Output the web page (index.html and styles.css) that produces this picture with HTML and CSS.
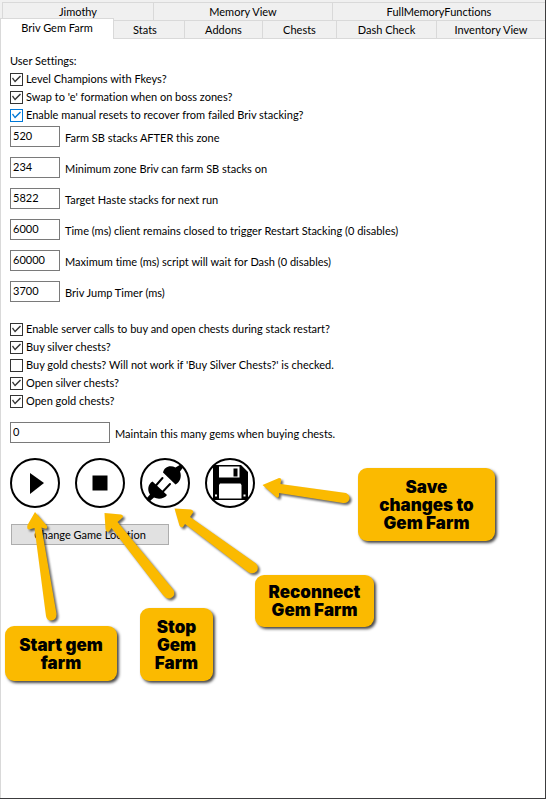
FILE: index.html
```
<!DOCTYPE html>
<html lang="en">
<head>
<meta charset="utf-8">
<meta name="viewport" content="width=device-width, initial-scale=1">
<title>Briv Gem Farm</title>
<link rel="stylesheet" href="styles.css">
</head>
<body>
<main class="window">
  <nav class="tabs">
    <div class="tab-row tab-row-back">
      <button class="tab">Jimothy</button>
      <button class="tab">Memory View</button>
      <button class="tab">FullMemoryFunctions</button>
    </div>
    <div class="tab-row tab-row-front">
      <button class="tab tab-active">Briv Gem Farm</button>
      <button class="tab">Stats</button>
      <button class="tab">Addons</button>
      <button class="tab">Chests</button>
      <button class="tab">Dash Check</button>
      <button class="tab">Inventory View</button>
    </div>
  </nav>

  <form class="panel">
    <section class="group">
      <h1 class="heading">User Settings:</h1>
      <label class="check"><input type="checkbox" checked>Level Champions with Fkeys?</label>
      <label class="check"><input type="checkbox" checked>Swap to 'e' formation when on boss zones?</label>
      <label class="check check-hot"><input type="checkbox" checked>Enable manual resets to recover from failed Briv stacking?</label>
    </section>

    <section class="fields">
      <label class="field"><input type="text" value="520"><span>Farm SB stacks AFTER this zone</span></label>
      <label class="field"><input type="text" value="234"><span>Minimum zone Briv can farm SB stacks on</span></label>
      <label class="field"><input type="text" value="5822"><span>Target Haste stacks for next run</span></label>
      <label class="field"><input type="text" value="6000"><span>Time (ms) client remains closed to trigger Restart Stacking (0 disables)</span></label>
      <label class="field"><input type="text" value="60000"><span>Maximum time (ms) script will wait for Dash (0 disables)</span></label>
      <label class="field"><input type="text" value="3700"><span>Briv Jump Timer (ms)</span></label>
    </section>

    <section class="group chests">
      <label class="check"><input type="checkbox" checked>Enable server calls to buy and open chests during stack restart?</label>
      <label class="check"><input type="checkbox" checked>Buy silver chests?</label>
      <label class="check"><input type="checkbox">Buy gold chests? Will not work if 'Buy Silver Chests?' is checked.</label>
      <label class="check"><input type="checkbox" checked>Open silver chests?</label>
      <label class="check"><input type="checkbox" checked>Open gold chests?</label>
    </section>

    <label class="field field-wide"><input type="text" value="0"><span>Maintain this many gems when buying chests.</span></label>

    <div class="actions">
      <button type="button" class="round" aria-label="Start">
        <svg viewBox="0 0 50 50"><circle class="ring" cx="25" cy="25" r="24"/><path d="M20 15 34 25 20 36Z"/></svg>
      </button>
      <button type="button" class="round" aria-label="Stop">
        <svg viewBox="0 0 50 50"><circle class="ring" cx="25" cy="25" r="24"/><path d="M17.500 17.500h15v15h-15z"/></svg>
      </button>
      <button type="button" class="round" aria-label="Reconnect">
        <svg viewBox="0 0 50 50"><circle class="ring" cx="25" cy="25" r="24"/>
          <path d="M23 14.500C24 9 30 6.500 35.500 9.500L40.500 6.500 43 9.500 40 13.500C42 19 40 24 35.500 26.500Z"/>
          <path d="M12.500 23.500 27 37C24 41 18 41.500 14 39.500L9.500 43.500 6.500 40.500 10 36.500C7 32 8 26 12.500 23.500Z"/>
          <path class="prongs" d="M15.500 28 22.500 20M22.500 34 30 26"/>
        </svg>
      </button>
      <button type="button" class="round" aria-label="Save">
        <svg viewBox="0 0 50 50"><circle class="ring" cx="25" cy="25" r="24"/>
          <path d="M8 7H36L43 14V42H8Z"/>
          <path class="paper" d="M14 8.500H34.500V19.500H14ZM15 25.500H35.500L36.500 27V40.500H14V27ZM10 36.500h2v2h-2zM38.500 36.500h2v2h-2z"/>
          <path d="M28.500 10.500h4v8h-4z"/>
        </svg>
      </button>
    </div>

    <button type="button" class="location">Change Game Location</button>
  </form>

  <div class="notes">
    <svg class="arrows" width="360" height="160" viewBox="0 470 360 160" aria-hidden="true">
      <path d="M35 512 47 526Q48 530 43 528L41.500 527.500 56.500 614Q56.500 620 51 620.500Q47 620.500 46 616L34.500 528 29 529.500Q26.500 529.500 27.500 525Z"/>
      <path d="M104.500 513 121 514.500Q125 516 121 519L117.500 522 173.500 590Q176 595 171 598Q167 600 163 595L111.500 528 109 531.500Q106 533 105.500 529Z"/>
      <path d="M174.500 508.500 191 509.500Q195 511 192 514L190 517 256 563.500Q259 567 257 571Q253 575 248 572L185 524 183 527Q180 528 179 524Z"/>
      <path d="M262.500 485 279 478Q282 478 281 481L280.500 484 346 493Q350 495 349.500 499Q348 503.500 343 503L279 493 279 496Q278 499 275.500 496.500Z"/>
    </svg>
    <p class="note note-start">Start gem<br>farm</p>
    <p class="note note-stop">Stop<br>Gem<br>Farm</p>
    <p class="note note-reconnect">Reconnect<br>Gem Farm</p>
    <p class="note note-save">Save<br>changes to<br>Gem Farm</p>
  </div>
</main>
</body>
</html>
```

FILE: styles.css
```
* {
  box-sizing: border-box;
}

body {
  margin: 0;
  background: #fff;
  color: #000;
  font: 11px/18px Lato, Arial, sans-serif;
  font-variant-ligatures: none;
}

button,
input {
  font: inherit;
  font-variant-ligatures: none;
  color: inherit;
}

.window {
  position: relative;
  min-height: 100vh;
  border: solid #3c3c3e;
  border-width: 0 1px 1px 0;
}

.tabs {
  padding-top: 2px;
  background: #f0f0f0;
}

.tab-row {
  display: grid;
}

.tab-row-back {
  grid-template-columns: 151fr 179fr 213fr;
  margin-left: 2px;
}

.tab-row-front {
  grid-template-columns: 114fr 70fr 78fr 74fr 100fr 109fr;
}

.tab {
  height: 18px;
  padding: 0;
  border: solid #d9d9d9;
  border-width: 1px 0 0 1px;
  background: #f0f0f0;
  line-height: 18px;
}

.tab-row-front .tab {
  height: 19px;
  border-bottom-width: 1px;
}

.tab-row-front .tab-active {
  height: 21px;
  margin-top: -2px;
  padding-bottom: 2px;
  border-width: 1px 1px 0;
  background: #fff;
}

.tab-active + .tab {
  padding-right: 8px;
  border-left: 0;
}

.panel {
  min-height: calc(100vh - 40px);
  padding: 13px 9px;
  border-left: 1px solid #d9d9d9;
}

.heading {
  margin: 0;
  font: inherit;
  font-variant-ligatures: none;
}

.check {
  display: flex;
  align-items: center;
  gap: 3px;
  width: max-content;
}

.check input {
  appearance: none;
  width: 13px;
  height: 13px;
  margin: 0;
  border: 1px solid #333;
  background: #fff;
}

.check input:checked::before {
  content: "";
  display: block;
  width: 11px;
  height: 11px;
  background: #333;
  clip-path: polygon(1px 5px, 2px 4px, 4px 7px, 9px 2px, 10px 3px, 4px 9px);
}

.check-hot input {
  border-color: #0078d7;
}

.check-hot input:checked::before {
  background: #0078d7;
}

.fields {
  display: grid;
  gap: 10px;
  margin-top: 2px;
}

.field {
  display: flex;
  gap: 5px;
}

.field input {
  width: 50px;
  height: 21px;
  padding: 0 2px 2px;
  border: 1px solid #7a7a7a;
  background: #fff;
}

.field span {
  padding-top: 3px;
}

.field-wide input {
  width: 100px;
}

.chests {
  margin: 18px 0 12px;
}

.actions {
  display: flex;
  gap: 15px;
  margin-top: 15px;
}

.round {
  width: 50px;
  height: 50px;
  padding: 0;
  border: 0;
  background: none;
}

.round svg {
  display: block;
}

.ring {
  fill: #fff;
  stroke: #000;
  stroke-width: 2;
}

.paper {
  fill: #fff;
}

.prongs {
  fill: none;
  stroke: #000;
  stroke-width: 2;
  stroke-linecap: round;
}

.location {
  display: block;
  width: 158px;
  height: 21px;
  margin: 16px 0 0 1px;
  padding: 0;
  border: 1px solid #adadad;
  background: #e1e1e1;
}

/* Callouts laid over the form */
.arrows {
  position: absolute;
  left: 0;
  top: 470px;
  fill: #fbba00;
  filter: drop-shadow(2px 2px 1px #0009);
  pointer-events: none;
}

.note {
  position: absolute;
  display: grid;
  place-content: center;
  margin: 0;
  border-radius: 9px;
  background: #fbba00;
  box-shadow: 2px 2px 3px #000b;
  font: 900 17px/18px Inter, "Arial Black", sans-serif;
  text-align: center;
}

.note-start {
  left: 5px;
  top: 626px;
  width: 112px;
  height: 55px;
}

.note-stop {
  left: 140px;
  top: 608px;
  width: 73px;
  height: 73px;
}

.note-reconnect {
  left: 255px;
  top: 575px;
  width: 119px;
  height: 52px;
}

.note-save {
  left: 358px;
  top: 468px;
  width: 137px;
  height: 73px;
}
```
